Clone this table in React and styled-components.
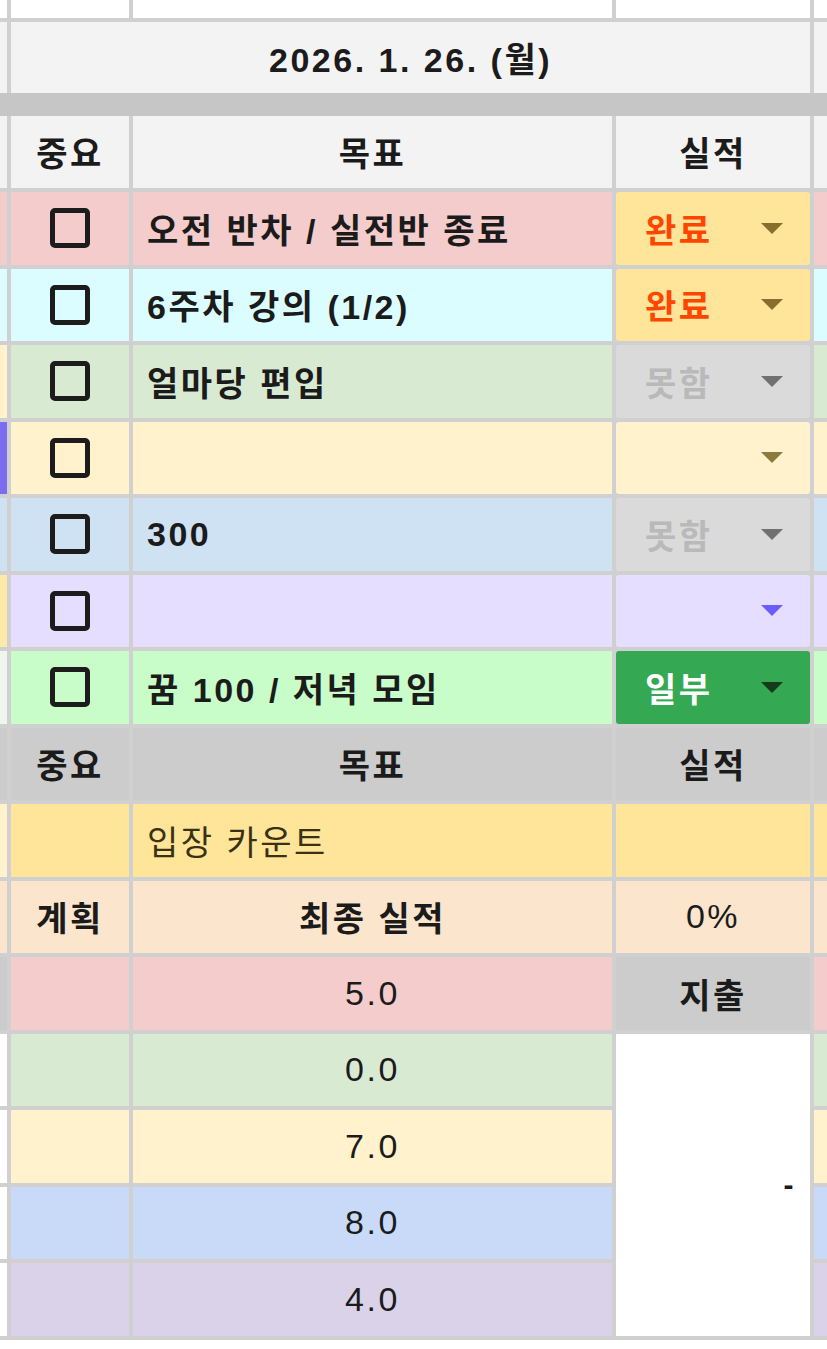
import React from "react";
import styled, { createGlobalStyle } from "styled-components";

const GlobalStyle = createGlobalStyle`
  html, body {
    margin: 0;
    padding: 0;
    background: #ffffff;
  }
  body {
    font-family: "Liberation Sans", "Noto Sans CJK KR", sans-serif;
  }
`;

const LINE = "#d0d0d0";

const Sheet = styled.div`
  display: grid;
  grid-template-columns: 7px 118px 479px 194px 13px;
  grid-template-rows: 18px 71px 14.5px repeat(16, 72.5px);
  column-gap: 4px;
  row-gap: 4px;
  width: 827px;
  background: ${LINE};
  padding-bottom: 4px;
  font-size: 34px;
  letter-spacing: 2.5px;
  color: #1b1b1b;
`;

const Edge = styled.div`
  background: ${(p) => p.$bg || "#ffffff"};
`;

const Blank = styled.div`
  background: ${(p) => p.$bg || "#ffffff"};
`;

const Band = styled.div`
  grid-column: 1 / -1;
  background: #c6c6c6;
  margin: -4px 0;
`;

const DateCell = styled.div`
  grid-column: 2 / span 3;
  background: #f3f3f3;
  display: flex;
  align-items: center;
  justify-content: center;
  font-weight: 700;
`;

const HeadCell = styled.div`
  background: ${(p) => p.$bg};
  display: flex;
  align-items: center;
  justify-content: center;
  font-weight: 700;
`;

const CheckCell = styled.div`
  background: ${(p) => p.$bg};
  display: flex;
  align-items: center;
  justify-content: center;
`;

const Checkbox = styled.span`
  box-sizing: border-box;
  width: 40px;
  height: 40px;
  border: 5px solid #1c1c1c;
  border-radius: 5px;
`;

const GoalCell = styled.div`
  background: ${(p) => p.$bg};
  display: flex;
  align-items: center;
  justify-content: flex-start;
  padding: 0 14px;
  font-weight: ${(p) => (p.$bold ? 700 : 400)};
  color: ${(p) => p.$color || "#1b1b1b"};
  white-space: nowrap;
  overflow: hidden;
`;

const StatusCell = styled.div`
  background: ${(p) => p.$bg};
  display: flex;
  align-items: center;
  justify-content: space-between;
  padding: 0 27px 0 29px;
  border-radius: 3px;
  font-weight: 700;
  color: ${(p) => p.$color};
`;

const Arrow = styled.span`
  width: 0;
  height: 0;
  margin-left: auto;
  border-left: 11px solid transparent;
  border-right: 11px solid transparent;
  border-top: 11px solid ${(p) => p.$color};
`;

const ValueCell = styled.div`
  background: ${(p) => p.$bg};
  display: flex;
  align-items: center;
  justify-content: center;
  font-weight: ${(p) => (p.$bold ? 700 : 400)};
`;

const MergedCell = styled.div`
  grid-row: span 4;
  background: #ffffff;
  display: flex;
  align-items: center;
  justify-content: flex-end;
  padding: 0 14px;
  font-weight: 700;
  font-size: 30px;
`;

const tasks = [
  { edge: "#f4cccc", bg: "#f4cccc", right: "#f4cccc", goal: "오전 반차 / 실전반 종료", status: "완료", sBg: "#ffe599", sColor: "#ff4500", arrow: "#8a6d2c" },
  { edge: "#dcfcff", bg: "#dbfdff", right: "#dbfdff", goal: "6주차 강의 (1/2)", status: "완료", sBg: "#ffe599", sColor: "#ff4500", arrow: "#8a6d2c" },
  { edge: "#fff2cc", bg: "#d9ead3", right: "#d9ead3", goal: "얼마당 편입", status: "못함", sBg: "#dadada", sColor: "#b9b9b9", arrow: "#707070" },
  { edge: "#7b6cf0", bg: "#fff2cc", right: "#fff2cc", goal: "", status: "", sBg: "#fff2cc", sColor: "#000", arrow: "#8d7a3d" },
  { edge: "#cfe2f3", bg: "#cfe2f3", right: "#cfe2f3", goal: "300", status: "못함", sBg: "#dadada", sColor: "#b9b9b9", arrow: "#707070" },
  { edge: "#fde9a9", bg: "#e6deff", right: "#e6deff", goal: "", status: "", sBg: "#e6deff", sColor: "#000", arrow: "#6b5cff" },
  { edge: "#eef6ee", bg: "#c8fcc8", right: "#c8fcc8", goal: "꿈 100 / 저녁 모임", status: "일부", sBg: "#34a853", sColor: "#ffffff", arrow: "#173a1d" },
];

const scores = [
  { bg: "#d9ead3", value: "0.0" },
  { bg: "#fff2cc", value: "7.0" },
  { bg: "#c9daf8", value: "8.0" },
  { bg: "#d9d2e9", value: "4.0" },
];

const headers = ["중요", "목표", "실적"];

export default function App() {
  return (
    <>
      <GlobalStyle />
      <Sheet>
        <Edge />
        <Blank />
        <Blank />
        <Blank />
        <Edge />

        <Edge $bg="#f3f3f3" />
        <DateCell>2026. 1. 26. (월)</DateCell>
        <Edge $bg="#f3f3f3" />

        <Band />

        <Edge $bg="#f3f3f3" />
        {headers.map((h) => (
          <HeadCell key={h} $bg="#f3f3f3">{h}</HeadCell>
        ))}
        <Edge $bg="#f3f3f3" />

        {tasks.map((t, i) => (
          <React.Fragment key={i}>
            <Edge $bg={t.edge} />
            <CheckCell $bg={t.bg}>
              <Checkbox />
            </CheckCell>
            <GoalCell $bg={t.bg} $bold>{t.goal}</GoalCell>
            <StatusCell $bg={t.sBg} $color={t.sColor}>
              {t.status}
              <Arrow $color={t.arrow} />
            </StatusCell>
            <Edge $bg={t.right} />
          </React.Fragment>
        ))}

        <Edge $bg="#cccccc" />
        {headers.map((h) => (
          <HeadCell key={h} $bg="#cccccc">{h}</HeadCell>
        ))}
        <Edge $bg="#cccccc" />

        <Edge $bg="#fff2cc" />
        <Blank $bg="#ffe599" />
        <GoalCell $bg="#ffe599" $color="#3a3115">입장 카운트</GoalCell>
        <Blank $bg="#ffe599" />
        <Edge $bg="#ffe599" />

        <Edge $bg="#fce5cd" />
        <HeadCell $bg="#fce5cd">계획</HeadCell>
        <HeadCell $bg="#fce5cd">최종 실적</HeadCell>
        <ValueCell $bg="#fce5cd">0%</ValueCell>
        <Edge $bg="#fce5cd" />

        <Edge $bg="#cccccc" />
        <Blank $bg="#f4cccc" />
        <ValueCell $bg="#f4cccc">5.0</ValueCell>
        <ValueCell $bg="#cccccc" $bold>지출</ValueCell>
        <Edge $bg="#f4cccc" />

        {scores.map((s, i) => (
          <React.Fragment key={s.value}>
            <Edge />
            <Blank $bg={s.bg} />
            <ValueCell $bg={s.bg}>{s.value}</ValueCell>
            {i === 0 && <MergedCell>-</MergedCell>}
            <Edge $bg={s.bg} />
          </React.Fragment>
        ))}
      </Sheet>
    </>
  );
}
